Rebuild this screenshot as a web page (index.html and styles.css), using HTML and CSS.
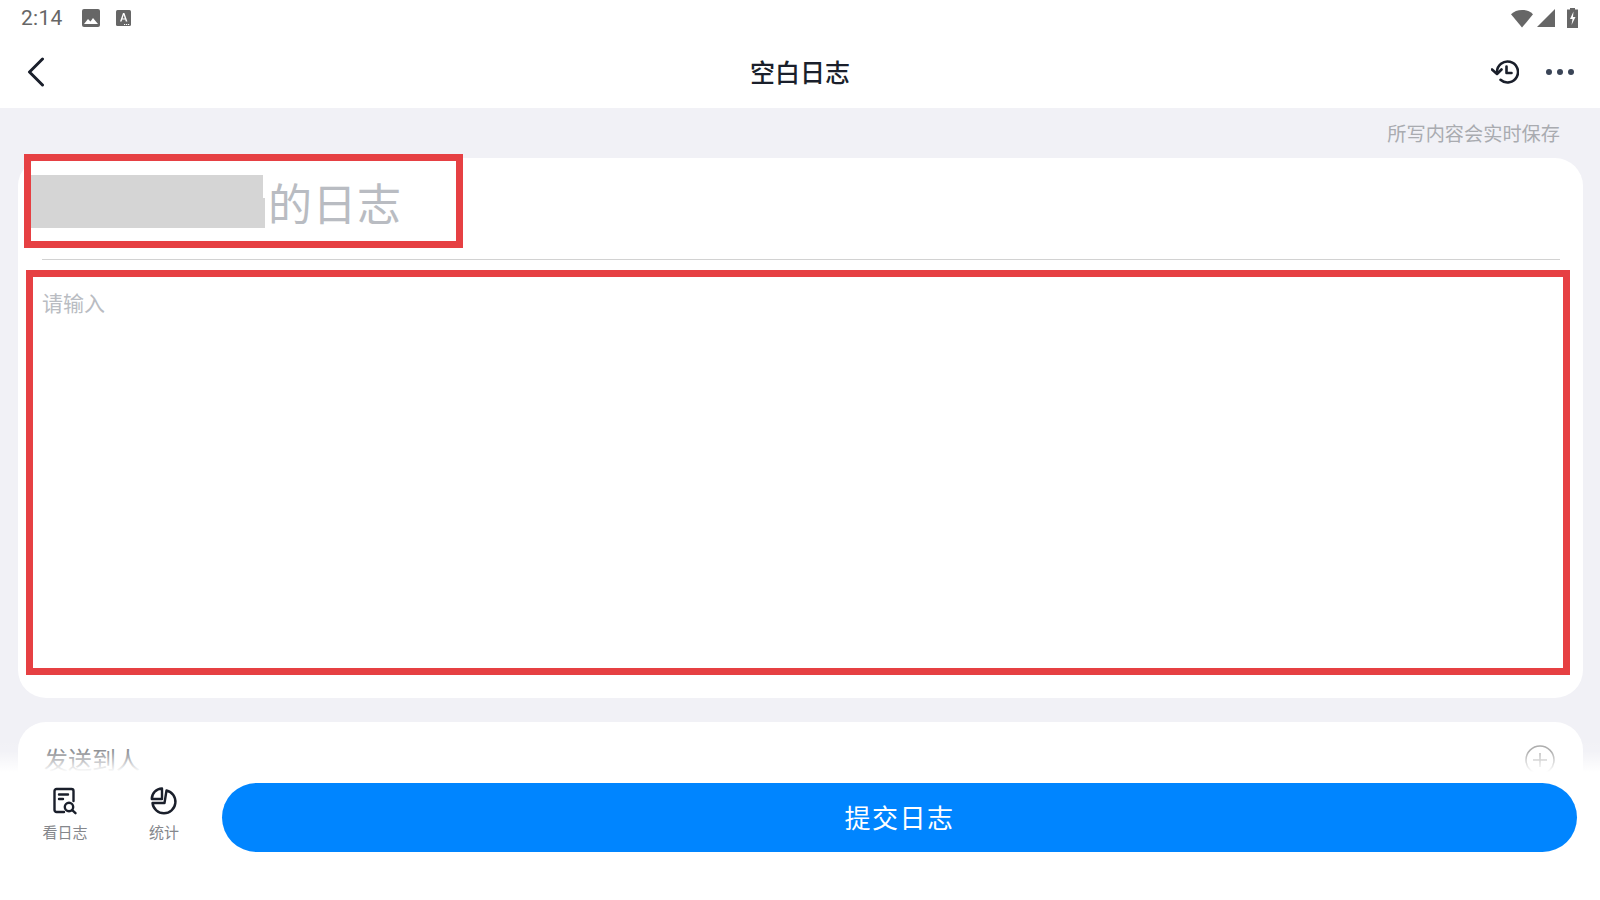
FILE: index.html
```html
<!DOCTYPE html>
<html lang="zh">
<head>
<meta charset="utf-8">
<title>空白日志</title>
<link rel="stylesheet" href="styles.css">
</head>
<body>
<div class="app">
  <header class="status">
    <div class="status-left">
      <span class="time">2:14</span>
      <svg class="st-pic" viewBox="0 0 18 18"><rect x="0" y="0" width="18" height="18" rx="2" fill="#666"/><path d="M2 15l4-5 2.5 2.5L11 9l5 6z" fill="#fff"/></svg>
      <svg class="st-a" viewBox="0 0 15 16"><rect width="15" height="16" rx="1.5" fill="#666"/><path d="M4 11.5L7 3h1.4l3 8.5H9.800L9.200 9.600H6.200L5.600 11.500zM6.600 8.400h2.200L7.700 5z" fill="#fff"/><path d="M8 14h1.200v1H8zM10 14h1.200v1H10zM12 14h1.200v1H12z" fill="#fff"/></svg>
    </div>
    <div class="status-right">
      <svg class="st-wifi" viewBox="0 0 23 19"><path d="M0 5C3 2 7 0.500 11.500 0.500S20 2 23 5L11.500 19z" fill="#666"/></svg>
      <svg class="st-signal" viewBox="0 0 19 19"><path d="M19 0v19H0z" fill="#666"/></svg>
      <svg class="st-batt" viewBox="0 0 11 20"><path d="M3 0h5v1.500h3V20H0V1.500h3z" fill="#666"/><path d="M6.500 3.500L3 11h2.500l-1 6L8.500 9H6z" fill="#fff"/></svg>
    </div>
  </header>
  <nav class="nav">
    <svg class="back" viewBox="0 0 18 30"><path d="M15.500 2L2.500 15l13 13" fill="none" stroke="#1a1f2b" stroke-width="3" stroke-linecap="round" stroke-linejoin="round"/></svg>
    <h1 class="nav-title">空白日志</h1>
    <div class="nav-actions">
      <svg class="history" viewBox="0 0 28 26"><path d="M6 13a10.500 10.500 0 1 1 3.500 7.800" fill="none" stroke="#1a1f2b" stroke-width="2.600" stroke-linecap="round"/><path d="M1 10.500l5 4.500 4.500-4.500" fill="none" stroke="#1a1f2b" stroke-width="2.600" stroke-linecap="round" stroke-linejoin="round"/><path d="M15.500 7.500v6.500h5" fill="none" stroke="#1a1f2b" stroke-width="2.600" stroke-linecap="round" stroke-linejoin="round"/></svg>
      <div class="dots"><i></i><i></i><i></i></div>
    </div>
  </nav>
  <main class="main">
    <div class="hint">所写内容会实时保存</div>
    <section class="card card-edit">
      <div class="title-row">
        <span class="blurred"></span>
        <span class="title-text">的日志</span>
      </div>
      <div class="divider"></div>
      <div class="placeholder">请输入</div>
    </section>
    <section class="card card-send">
      <span class="send-label">发送到人</span>
      <svg class="plus" viewBox="0 0 30 30"><circle cx="15" cy="15" r="14" fill="none" stroke="#a8a8a8" stroke-width="1.500"/><path d="M15 8v14M8 15h14" stroke="#b0b0b0" stroke-width="1.500"/></svg>
    </section>
  </main>
  <div class="red-box red-title"></div>
  <div class="red-box red-body"></div>
  <footer class="footer">
    <div class="fade"></div>
    <div class="bar">
      <div class="tool tool-log">
        <svg class="tool-icon" viewBox="0 0 26 28"><path d="M12 25H4.500A2 2 0 0 1 2.500 23V4A2 2 0 0 1 4.500 2h15a2 2 0 0 1 2 2v10" fill="none" stroke="#1a1f2b" stroke-width="2.400" stroke-linecap="round"/><path d="M7 7.500h9M7 12h4" stroke="#1a1f2b" stroke-width="2.400" stroke-linecap="round"/><circle cx="17" cy="20" r="4.200" fill="none" stroke="#1a1f2b" stroke-width="2.400"/><path d="M20.200 23.200l3.300 3" stroke="#1a1f2b" stroke-width="2.400" stroke-linecap="round"/></svg>
        <span class="tool-label">看日志</span>
      </div>
      <div class="tool tool-stat">
        <svg class="tool-icon" viewBox="0 0 28 28"><path d="M16.500 3.500A11.500 11.500 0 1 1 2.500 16H14.500z" fill="none" stroke="#1a1f2b" stroke-width="2.400" stroke-linejoin="round"/><path d="M12 1.500A10.500 10.500 0 0 0 1.800 12H12z" fill="none" stroke="#1a1f2b" stroke-width="2.400" stroke-linejoin="round"/></svg>
        <span class="tool-label">统计</span>
      </div>
      <button class="submit">提交日志</button>
    </div>
  </footer>
</div>
</body>
</html>
```
FILE: styles.css
```css
* { box-sizing: border-box; margin: 0; padding: 0; }
html, body { width: 1600px; height: 900px; overflow: hidden; background: #fff; }
body { font-family: "Noto Sans CJK SC", "Liberation Sans", sans-serif; }
.app { position: relative; width: 1600px; height: 900px; display: flex; flex-direction: column; overflow: hidden; }

.status { height: 36px; display: flex; justify-content: space-between; align-items: center; padding: 0 22px 0 21px; flex: none; }
.status-left { display: flex; align-items: center; }
.time { font-family: Roboto, sans-serif; font-size: 21px; color: #666; width: 61px; letter-spacing: 0.3px; }
.st-pic { width: 18px; height: 18px; margin-right: 16px; }
.st-a { width: 15px; height: 16px; }
.status-right { display: flex; align-items: center; }
.st-wifi { width: 22px; height: 19px; }
.st-signal { width: 18px; height: 18px; margin-left: 4px; }
.st-batt { width: 11px; height: 20px; margin-left: 12px; }

.nav { height: 72px; display: flex; align-items: center; justify-content: space-between; position: relative; padding: 0 26px 0 27px; flex: none; }
.back { width: 18px; height: 30px; }
.nav-title { position: absolute; left: 0; right: 0; top: -1px; text-align: center; font-size: 25px; font-weight: 500; color: #1a1f2b; line-height: 72px; }
.nav-actions { display: flex; align-items: center; gap: 27px; }
.history { width: 28px; height: 26px; }
.dots { display: flex; gap: 5px; }
.dots i { width: 6px; height: 6px; border-radius: 50%; background: #3a4557; display: block; }

.main { flex: 1; background: #f1f1f6; padding: 0 17px 0 18px; display: flex; flex-direction: column; }
.hint { height: 50px; line-height: 50px; text-align: right; font-size: 19.200px; color: #a9abb0; padding-right: 23px; flex: none; }
.card { background: #fff; border-radius: 28px; flex: none; }
.card-edit { height: 540px; }
.title-row { height: 100px; display: flex; align-items: center; padding: 0 0 13px 13px; }
.blurred { width: 234px; height: 53px; background: #d5d5d5; clip-path: polygon(0 0, 232px 0, 232px 23px, 234px 23px, 234px 53px, 0 53px); }
.title-text { font-size: 44px; color: #b9bcc2; margin-left: 3px; letter-spacing: 0.5px; line-height: 60px; }
.divider { height: 1px; background: #d2d2d2; margin: 1px 23px 0 24px; }
.placeholder { font-size: 21px; color: #b9bcc2; padding: 28px 0 0 24px; line-height: 28px; }
.card-send { margin-top: 24px; height: 200px; display: flex; justify-content: space-between; padding: 20px 28px 0 26px; }
.send-label { font-size: 24px; color: #85878c; line-height: 34px; }
.plus { width: 30px; height: 30px; margin-top: 3px; }

.red-box { position: absolute; border: 7px solid #e64043; }
.red-title { left: 24px; top: 154px; width: 439px; height: 94px; }
.red-body { left: 26px; top: 270px; width: 1544px; height: 405px; }

.footer { position: absolute; left: 0; right: 0; bottom: 0; height: 162px; display: flex; flex-direction: column; }
.fade { height: 34px; flex: none; background: linear-gradient(rgba(255,255,255,0), rgba(255,255,255,0.1) 40%, #fff); }
.bar { flex: 1; background: #fff; display: flex; align-items: flex-start; padding-top: 11px; }
.tool { display: flex; flex-direction: column; align-items: center; flex: none; }
.tool-log { width: 100px; margin-left: 15px; }
.tool-stat { width: 100px; margin-left: -1px; }
.tool-icon { width: 28px; height: 28px; margin-top: 4px; }
.tool-label { font-size: 15px; color: #85878c; line-height: 20px; margin-top: 7px; }
.submit { width: 1355px; height: 69px; margin-left: 8px; padding-bottom: 2px; border: 0; border-radius: 35px; background: #0085ff; color: #fff; font-family: inherit; font-size: 26px; letter-spacing: 1.500px; }
```
